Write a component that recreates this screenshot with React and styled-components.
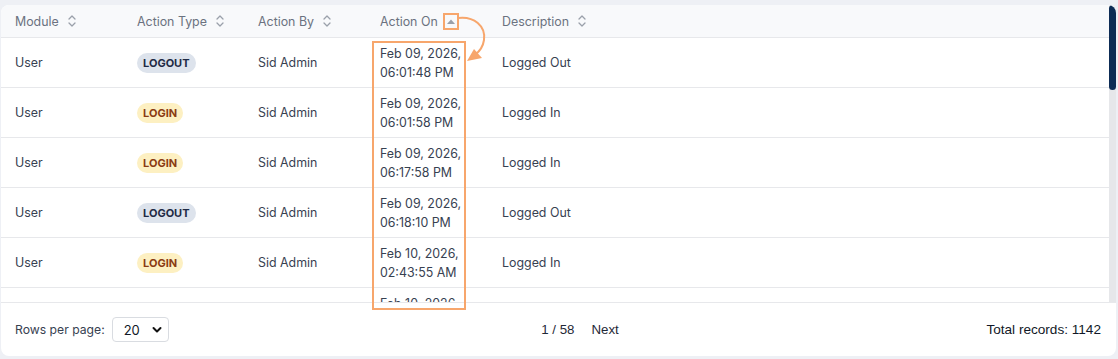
import styled, { createGlobalStyle } from 'styled-components';

const GlobalStyle = createGlobalStyle`
  html, body {
    margin: 0;
    padding: 0;
    background: #eef0f5;
    font-family: Inter, "Noto Sans", sans-serif;
  }
  * { box-sizing: border-box; }
`

const Page = styled.div`
  position: relative;
  width: 1118px;
  height: 359px;
  padding: 5px 2px 3px 1px;
`

const Card = styled.div`
  background: #fff;
  border-radius: 8px;
  height: 351px;
  display: flex;
  flex-direction: column;
  overflow: hidden;
`

const TableArea = styled.div`
  height: 297px;
  display: flex;
`

const Scroller = styled.div`
  flex: 1;
  overflow: hidden;
`

const Track = styled.div`
  width: 7px;
  background: #e6e7ea;
`

const Thumb = styled.div`
  height: 85px;
  background: #0d2c55;
  border-radius: 4px;
`

const Row = styled.div`
  display: grid;
  grid-template-columns: 122px 121px 122px 122px 1fr;
  align-items: center;
  height: ${({ $head }) => ($head ? '33px' : '50px')};
  border-bottom: 1px solid #e7e8eb;
  background: ${({ $head }) => ($head ? '#f8f9fb' : '#fff')};
`

const HeadCell = styled.div`
  padding-left: 14px;
  font-size: 12.4px;
  color: #6b7280;
  display: flex;
  align-items: center;
  gap: 8px;
`

const Cell = styled.div`
  padding-left: 14px;
  font-size: 12.4px;
  line-height: 19px;
  color: #374151;
`

const Badge = styled.span`
  display: inline-block;
  padding: 3px 6px;
  border-radius: 10px;
  font-size: 11px;
  font-weight: 700;
  line-height: 14px;
  background: ${({ $kind }) => ($kind === 'LOGIN' ? '#fdf0c2' : '#dde3ec')};
  color: ${({ $kind }) => ($kind === 'LOGIN' ? '#8a3b12' : '#1f2a44')};
`

const Footer = styled.div`
  flex: 1;
  border-top: 1px solid #e7e8eb;
  display: grid;
  grid-template-columns: 1fr auto 1fr;
  align-items: center;
  padding: 0 15px 0 14px;
  font-size: 12.2px;
  color: #374151;
`

const RowsPer = styled.div`
  display: flex;
  align-items: center;
  gap: 7px;
`

const Select = styled.div`
  width: 57px;
  height: 25px;
  border: 1px solid #d9dce1;
  border-radius: 4px;
  display: flex;
  align-items: center;
  justify-content: space-between;
  padding: 0 6px 0 11px;
  font-size: 13px;
  color: #111827;
`

const Pager = styled.div`
  display: flex;
  align-items: center;
  gap: 17px;
  font-family: "Liberation Sans", Arial, sans-serif;
  font-size: 13.3px;
  color: #1f2937;
  margin-left: 44px;
`

const Total = styled.div`
  justify-self: end;
  font-family: "Liberation Sans", Arial, sans-serif;
  font-size: 13.6px;
  color: #111827;
`

const Overlay = styled.svg`
  position: absolute;
  left: 0;
  top: 0;
  pointer-events: none;
  z-index: 5;
`

const SortIcon = ({ active }) => (
  <svg width="10" height="16" viewBox="0 0 10 16">
    {active ? (
      <path d="M1 11 L5 6.5 L9 11 Z" fill="#9aa0aa" />
    ) : (
      <g fill="none" stroke="#9aa0aa" strokeWidth="1.3" strokeLinecap="round" strokeLinejoin="round">
        <path d="M2 6 L5 3 L8 6" />
        <path d="M2 10 L5 13 L8 10" />
      </g>
    )}
  </svg>
)

const rows = [
  ['LOGOUT', 'Feb 09, 2026,', '06:01:48 PM', 'Logged Out'],
  ['LOGIN', 'Feb 09, 2026,', '06:01:58 PM', 'Logged In'],
  ['LOGIN', 'Feb 09, 2026,', '06:17:58 PM', 'Logged In'],
  ['LOGOUT', 'Feb 09, 2026,', '06:18:10 PM', 'Logged Out'],
  ['LOGIN', 'Feb 10, 2026,', '02:43:55 AM', 'Logged In'],
  ['LOGIN', 'Feb 10, 2026,', '02:51:12 AM', 'Logged In'],
]

const headers = ['Module', 'Action Type', 'Action By', 'Action On', 'Description']

const App = () => {
  return (
    <>
      <GlobalStyle />
      <Page>
        <Card>
          <TableArea>
            <Scroller>
              <Row $head>
                {headers.map((h) => (
                  <HeadCell key={h}>
                    {h}
                    <SortIcon active={h === 'Action On'} />
                  </HeadCell>
                ))}
              </Row>
              {rows.map(([type, d1, d2, desc], i) => (
                <Row key={i}>
                  <Cell>User</Cell>
                  <Cell><Badge $kind={type}>{type}</Badge></Cell>
                  <Cell>Sid Admin</Cell>
                  <Cell>{d1}<br />{d2}</Cell>
                  <Cell>{desc}</Cell>
                </Row>
              ))}
            </Scroller>
            <Track>
              <Thumb />
            </Track>
          </TableArea>
          <Footer>
            <RowsPer>
              Rows per page:
              <Select>
                20
                <svg width="10" height="8" viewBox="0 0 10 8">
                  <path d="M1.5 2 L5 5.5 L8.5 2" fill="none" stroke="#111" strokeWidth="2" strokeLinecap="round" strokeLinejoin="round" />
                </svg>
              </Select>
            </RowsPer>
            <Pager>
              <span>1 / 58</span>
              <span>Next</span>
            </Pager>
            <Total>Total records: 1142</Total>
          </Footer>
        </Card>
        <Overlay width="1118" height="359" viewBox="0 0 1118 359">
          <g fill="none" stroke="#f7a66c" strokeWidth="2">
            <rect x="444" y="14" width="14" height="15" />
            <rect x="373" y="42" width="92" height="267" />
            <path d="M458 18 C 474 16, 486 26, 484 40 C 483 47, 480 51, 475 55" />
          </g>
          <path d="M467 61 L474 49 L482 58 Z" fill="#f7a66c" />
        </Overlay>
      </Page>
    </>
  )
}

export default App
